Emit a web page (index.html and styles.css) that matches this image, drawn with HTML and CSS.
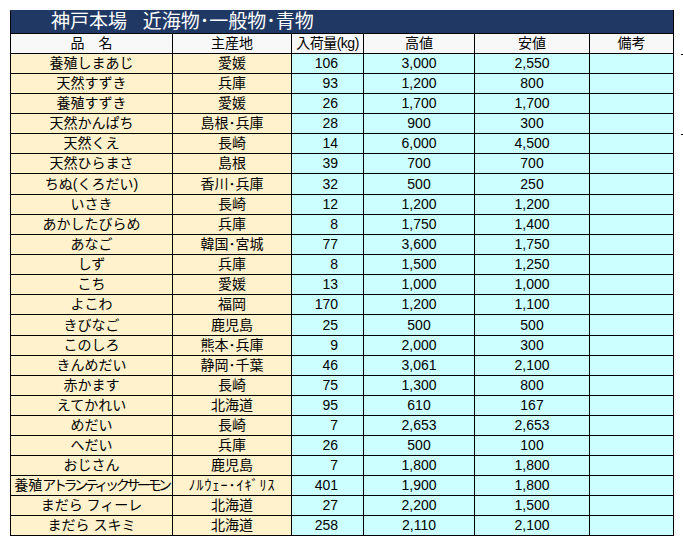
FILE: index.html
```html
<!DOCTYPE html>
<html lang="ja">
<head>
<meta charset="utf-8">
<title>神戸本場 近海物・一般物・青物</title>
<link rel="stylesheet" href="styles.css">
</head>
<body>
<div class="page">
<table class="sheet">
<colgroup>
<col class="c-name"><col class="c-origin"><col class="c-qty"><col class="c-high"><col class="c-low"><col class="c-note">
</colgroup>
<thead>
<tr class="title-row"><th colspan="6" class="title">神戸本場   近海物･一般物･青物</th></tr>
<tr class="head-row"><th>品　名</th><th>主産地</th><th class="qty-head">入荷量(kg)</th><th>高値</th><th>安値</th><th>備考</th></tr>
</thead>
<tbody>
<tr><td class="name">養殖しまあじ</td><td class="origin">愛媛</td><td class="qty">106</td><td class="price">3,000</td><td class="price">2,550</td><td class="note"></td></tr>
<tr><td class="name">天然すずき</td><td class="origin">兵庫</td><td class="qty">93</td><td class="price">1,200</td><td class="price">800</td><td class="note"></td></tr>
<tr><td class="name">養殖すずき</td><td class="origin">愛媛</td><td class="qty">26</td><td class="price">1,700</td><td class="price">1,700</td><td class="note"></td></tr>
<tr><td class="name">天然かんぱち</td><td class="origin">島根･兵庫</td><td class="qty">28</td><td class="price">900</td><td class="price">300</td><td class="note"></td></tr>
<tr><td class="name">天然くえ</td><td class="origin">長崎</td><td class="qty">14</td><td class="price">6,000</td><td class="price">4,500</td><td class="note"></td></tr>
<tr><td class="name">天然ひらまさ</td><td class="origin">島根</td><td class="qty">39</td><td class="price">700</td><td class="price">700</td><td class="note"></td></tr>
<tr class="tall"><td class="name">ちぬ(くろだい)</td><td class="origin">香川･兵庫</td><td class="qty">32</td><td class="price">500</td><td class="price">250</td><td class="note"></td></tr>
<tr><td class="name">いさき</td><td class="origin">長崎</td><td class="qty">12</td><td class="price">1,200</td><td class="price">1,200</td><td class="note"></td></tr>
<tr><td class="name">あかしたびらめ</td><td class="origin">兵庫</td><td class="qty">8</td><td class="price">1,750</td><td class="price">1,400</td><td class="note"></td></tr>
<tr><td class="name">あなご</td><td class="origin">韓国･宮城</td><td class="qty">77</td><td class="price">3,600</td><td class="price">1,750</td><td class="note"></td></tr>
<tr><td class="name">しず</td><td class="origin">兵庫</td><td class="qty">8</td><td class="price">1,500</td><td class="price">1,250</td><td class="note"></td></tr>
<tr><td class="name">こち</td><td class="origin">愛媛</td><td class="qty">13</td><td class="price">1,000</td><td class="price">1,000</td><td class="note"></td></tr>
<tr><td class="name">よこわ</td><td class="origin">福岡</td><td class="qty">170</td><td class="price">1,200</td><td class="price">1,100</td><td class="note"></td></tr>
<tr class="tall"><td class="name">きびなご</td><td class="origin">鹿児島</td><td class="qty">25</td><td class="price">500</td><td class="price">500</td><td class="note"></td></tr>
<tr><td class="name">このしろ</td><td class="origin">熊本･兵庫</td><td class="qty">9</td><td class="price">2,000</td><td class="price">300</td><td class="note"></td></tr>
<tr><td class="name">きんめだい</td><td class="origin">静岡･千葉</td><td class="qty">46</td><td class="price">3,061</td><td class="price">2,100</td><td class="note"></td></tr>
<tr><td class="name">赤かます</td><td class="origin">長崎</td><td class="qty">75</td><td class="price">1,300</td><td class="price">800</td><td class="note"></td></tr>
<tr><td class="name">えてかれい</td><td class="origin">北海道</td><td class="qty">95</td><td class="price">610</td><td class="price">167</td><td class="note"></td></tr>
<tr><td class="name">めだい</td><td class="origin">長崎</td><td class="qty">7</td><td class="price">2,653</td><td class="price">2,653</td><td class="note"></td></tr>
<tr><td class="name">へだい</td><td class="origin">兵庫</td><td class="qty">26</td><td class="price">500</td><td class="price">100</td><td class="note"></td></tr>
<tr><td class="name">おじさん</td><td class="origin">鹿児島</td><td class="qty">7</td><td class="price">1,800</td><td class="price">1,800</td><td class="note"></td></tr>
<tr><td class="name">養殖<span class="narrow">アトランティックサーモン</span></td><td class="origin halfkana">ﾉﾙｳｪｰ･ｲｷﾞﾘｽ</td><td class="qty">401</td><td class="price">1,900</td><td class="price">1,800</td><td class="note"></td></tr>
<tr><td class="name">まだら フィーレ</td><td class="origin">北海道</td><td class="qty">27</td><td class="price">2,200</td><td class="price">1,500</td><td class="note"></td></tr>
<tr><td class="name">まだら スキミ</td><td class="origin">北海道</td><td class="qty">258</td><td class="price">2,110</td><td class="price">2,100</td><td class="note"></td></tr>
</tbody>
</table>
<div class="side">
<span class="mark mark-top"></span>
<span class="mark mark-bottom"></span>
</div>
</div>
</body>
</html>
```

FILE: styles.css
```css
html, body {
  margin: 0;
  padding: 0;
  background: #ffffff;
}

body {
  font-family: "Liberation Sans", "Noto Sans CJK JP", sans-serif;
  font-size: 14px;
  color: #000000;
}

.page {
  display: flex;
  align-items: flex-start;
  padding: 10px 0 0 10px;
}

.sheet {
  border-collapse: collapse;
  table-layout: fixed;
  width: 663px;
  border: 1px solid #000000;
}

.c-name { width: 162px; }
.c-origin { width: 119px; }
.c-qty { width: 72px; }
.c-high { width: 111px; }
.c-low { width: 115px; }
.c-note { width: 84px; }

.sheet th,
.sheet td {
  padding: 0;
  height: 19px;
  line-height: 19px;
  border: 1px solid #000000;
  white-space: nowrap;
  overflow: hidden;
  font-weight: normal;
  text-align: center;
}

.sheet .tall td {
  height: 20px;
  line-height: 20px;
}

.title-row .title {
  height: 22px;
  line-height: 22px;
  background: #203864;
  color: #ffffff;
  font-size: 19px;
  text-align: left;
  padding-left: 40px;
  white-space: pre;
  border-color: #203864 #000000 #000000 #000000;
}

.head-row th {
  background: #f8f8f8;
  height: 19px;
  line-height: 19px;
}

.head-row .qty-head {
  letter-spacing: -0.5px;
}

.name,
.origin {
  background: #fff2cc;
}

.qty,
.price,
.note {
  background: #ccffff;
}

.sheet td.qty {
  text-align: right;
  padding-right: 25px;
}

.narrow {
  letter-spacing: -3.4px;
}

.halfkana {
  letter-spacing: 1px;
}

.side {
  display: flex;
  flex-direction: column;
  width: 10px;
  padding-left: 7px;
}

.mark {
  display: block;
  width: 3px;
  height: 1px;
  background: #000000;
}

.mark-top {
  margin-top: 44px;
}

.mark-bottom {
  margin-top: 79px;
}
```
